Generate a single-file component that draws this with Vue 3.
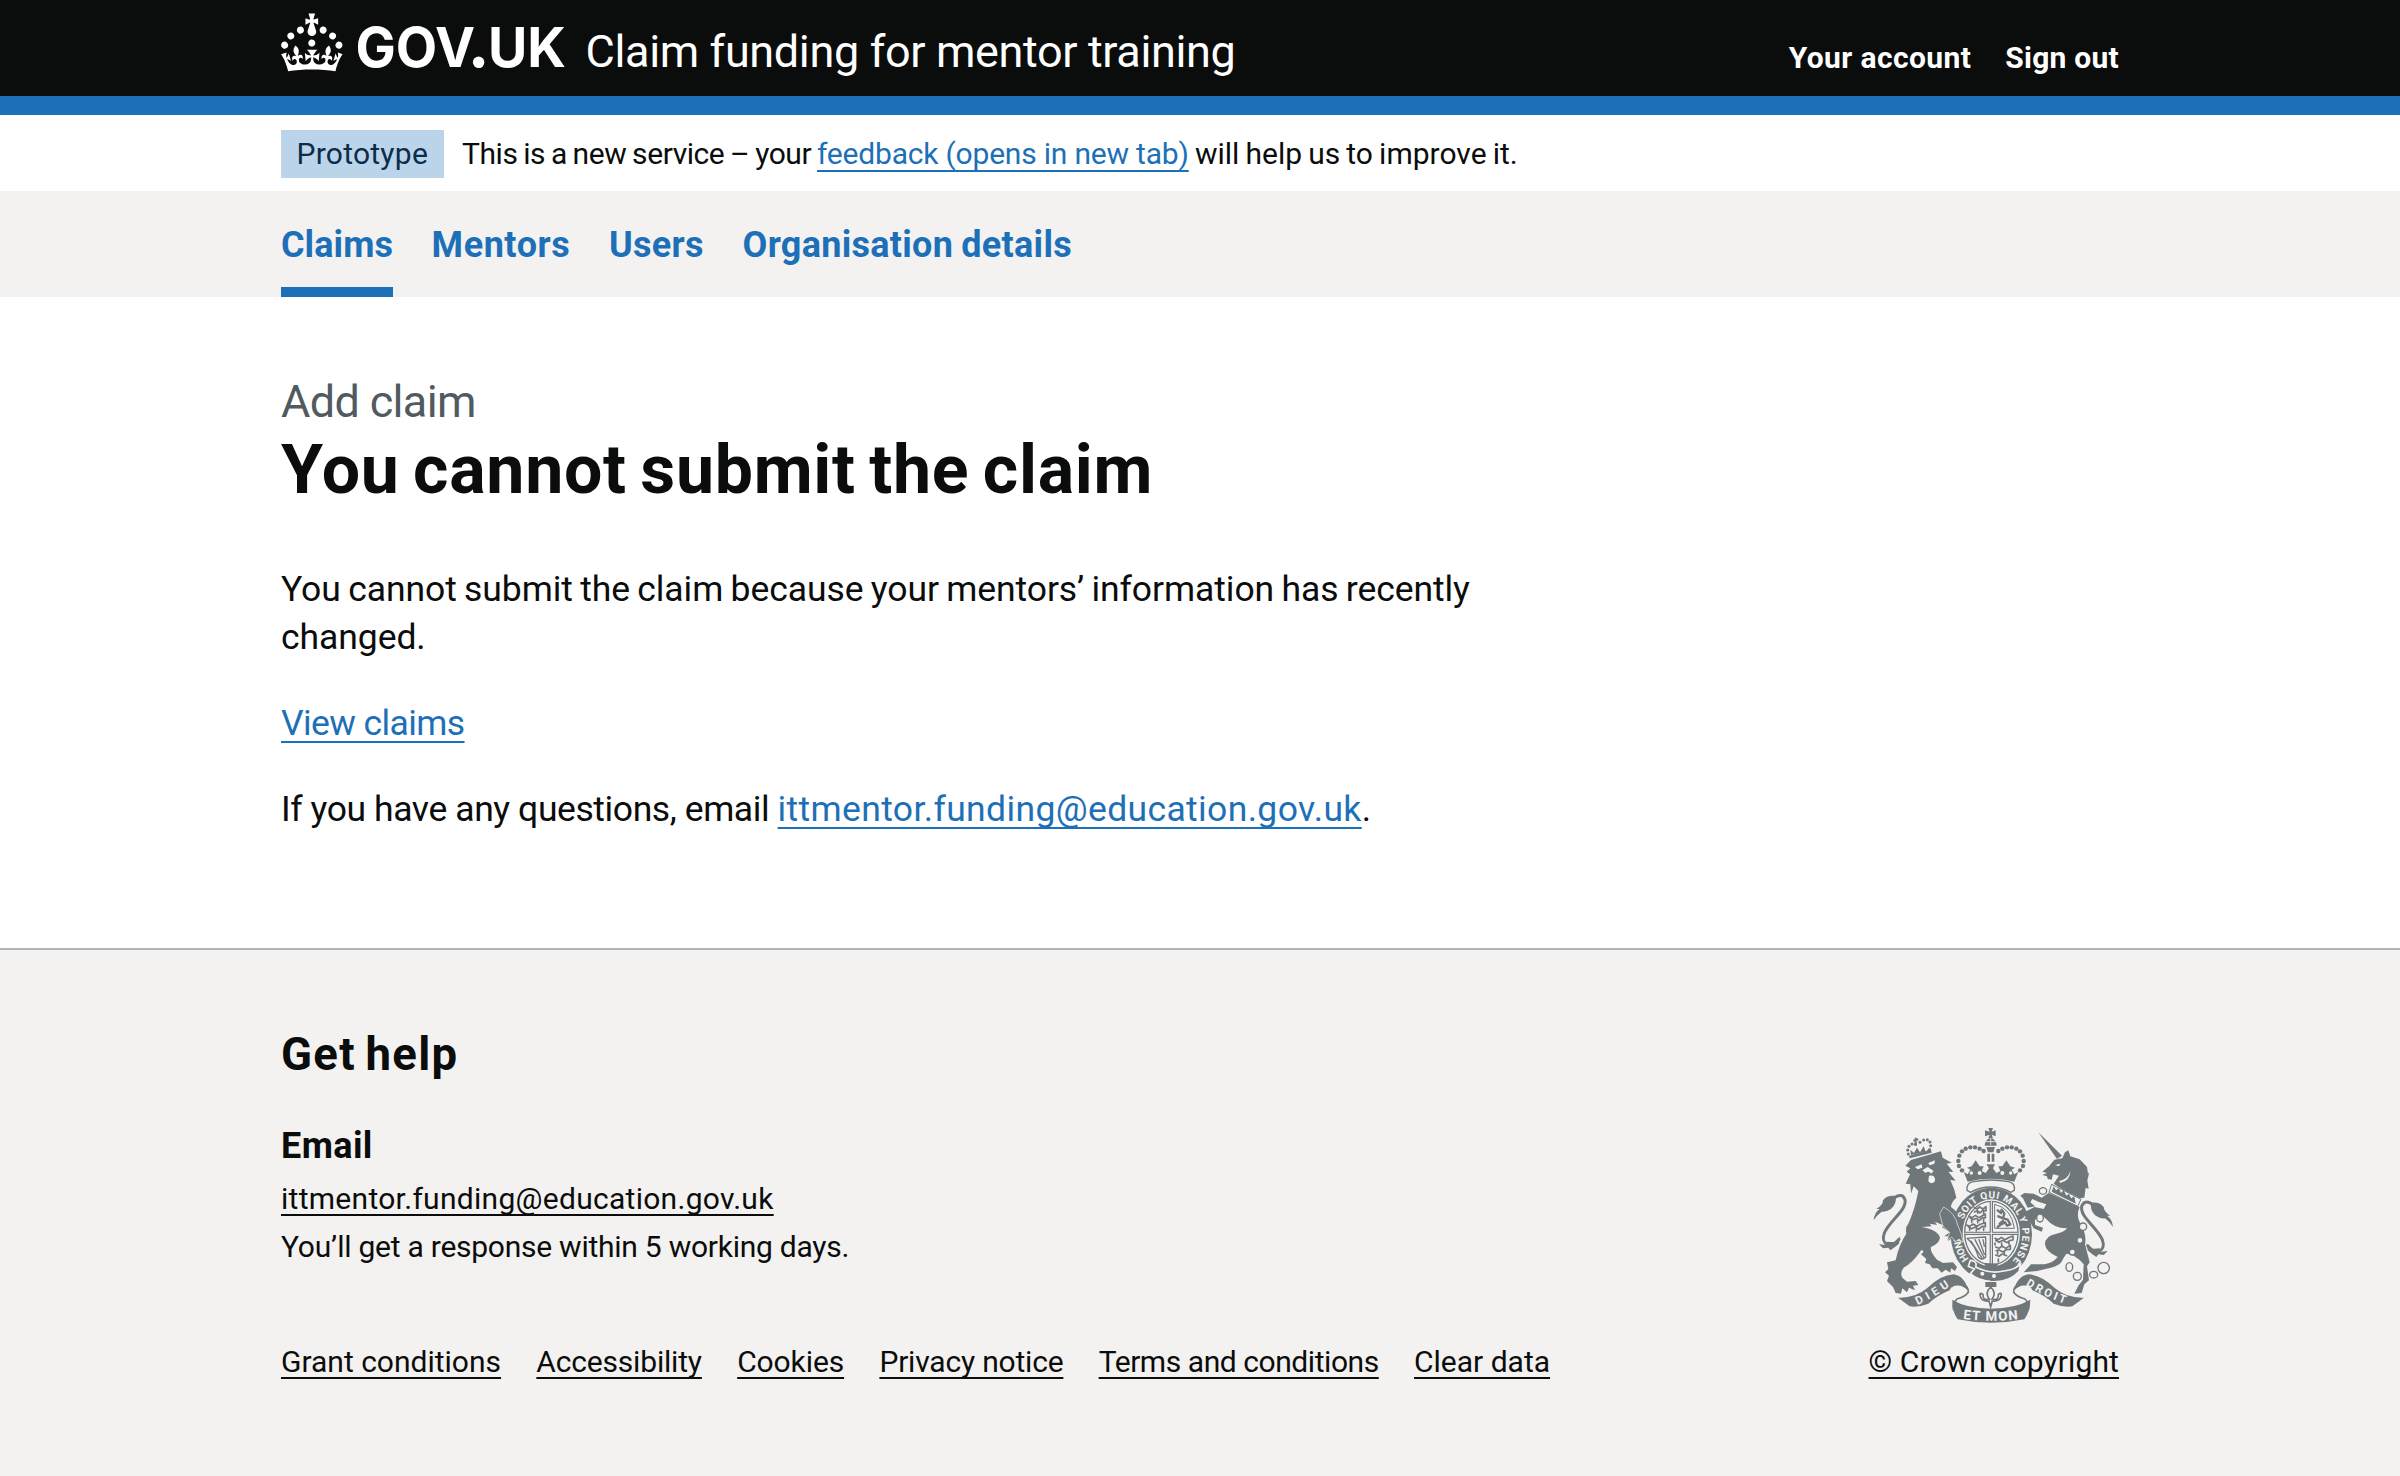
<script setup>
const nav = [
  { label: 'Claims', cls: 'n-claims', active: true },
  { label: 'Mentors', cls: 'n-mentors' },
  { label: 'Users', cls: 'n-users' },
  { label: 'Organisation details', cls: 'n-org' }
]
const footerLinks = [
  { label: 'Grant conditions', cls: 'f-grant' },
  { label: 'Accessibility', cls: 'f-access' },
  { label: 'Cookies', cls: 'f-cookies' },
  { label: 'Privacy notice', cls: 'f-privacy' },
  { label: 'Terms and conditions', cls: 'f-terms' },
  { label: 'Clear data', cls: 'f-clear' }
]
// Pearls on the left arch of the royal crown; the right arch is mirrored
const pearls = [[337, 180], [328, 167], [326, 152], [329, 136], [337, 123], [348, 115], [362, 111], [376, 111], [390, 115], [402, 122]]
const lionPearls = [[176, 131], [174, 119], [178, 108], [187, 101], [197, 102], [211, 96], [222, 89], [233, 88], [241, 95], [243, 106], [240, 118]]
</script>

<template>
  <div class="page">
    <header class="header">
      <div class="container header-row">
        <svg class="logo" viewBox="0 0 286 60" width="286" height="60" aria-label="GOV.UK">
          <g transform="translate(0 .4) scale(1.925)" fill="#fff">
            <path d="M22.6 10.4c-1 .4-2-.1-2.4-1-.4-.9.1-2 1-2.4.9-.4 2 .1 2.4 1s-.1 2-1 2.4m-5.9 6.7c-.9.4-2-.1-2.4-1-.4-.9.1-2 1-2.4.9-.4 2 .1 2.4 1s-.1 2-1 2.4m10.8-3.7c-1 .4-2-.1-2.4-1-.4-.9.1-2 1-2.4.9-.4 2 .1 2.4 1s0 2-1 2.4m3.3 4.8c-1 .4-2-.1-2.4-1-.4-.9.1-2 1-2.4.9-.4 2 .1 2.4 1s-.1 2-1 2.4M17 4.7l2.3 1.2V2.5l-2.3.7-.2-.2.9-3h-3.4l.9 3-.2.2c-.1.1-2.3-.7-2.3-.7v3.4L15 4.7c.1.1.1.2.2.2l-1.3 4c-.1.2-.1.4-.1.6 0 1.1.8 2 1.9 2.2h.7c1-.2 1.9-1.1 1.9-2.1 0-.2 0-.4-.1-.6l-1.3-4c-.1-.2 0-.2.1-.3m-7.6 5.7c.9.4 2-.1 2.4-1 .4-.9-.1-2-1-2.4-.9-.4-2 .1-2.4 1s0 2 1 2.4m-5 3c.9.4 2-.1 2.4-1 .4-.9-.1-2-1-2.4-.9-.4-2 .1-2.4 1s.1 2 1 2.4m-3.2 4.8c.9.4 2-.1 2.4-1 .4-.9-.1-2-1-2.4-.9-.4-2 .1-2.4 1s0 2 1 2.4m14.8 11c4.4 0 8.6.3 12.3.8 1.1-4.5 2.4-7 3.7-8.8l-2.5-.9c.2 1.3.3 1.9 0 2.7-.4-.4-.8-1.1-1.1-2.3l-1.2 4c.7-.5 1.3-.8 2-.9-1.1 2.5-2.6 3.1-3.5 3-1.1-.2-1.7-1.2-1.5-2.1.3-1.2 1.5-1.5 2.1-.1 1.1-2.3-.8-3-2-2.3 1.9-1.9 2.1-3.5.6-5.6-2.1 1.6-2.1 3.2-1.2 5.5-1.2-1.4-3.2-.6-2.5 1.6.9-1.4 2.1-.5 1.9.8-.2 1.1-1.7 2.1-3.5 1.9-2.7-.2-2.9-2.1-2.9-3.6.7-.1 1.9.5 2.9 1.9l.4-4.3c-1.1 1.1-2.1 1.4-3.2 1.4.4-1.2 2.1-3 2.1-3h-5.4s1.7 1.9 2.1 3c-1.1 0-2.1-.2-3.2-1.4l.4 4.3c1-1.4 2.2-2 2.9-1.9-.1 1.5-.2 3.4-2.9 3.6-1.9.2-3.4-.8-3.5-1.9-.2-1.3 1-2.2 1.9-.8.7-2.3-1.2-3-2.5-1.6.9-2.2.9-3.9-1.2-5.5-1.5 2-1.3 3.7.6 5.6-1.2-.7-3.1 0-2 2.3.6-1.4 1.8-1.1 2.1.1.2.9-.3 1.9-1.5 2.1-.9.2-2.4-.5-3.5-3 .6 0 1.2.3 2 .9l-1.2-4c-.3 1.1-.7 1.9-1.1 2.3-.3-.8-.2-1.4 0-2.7l-2.9.9C1.3 23 2.6 25.5 3.7 30c3.7-.5 7.9-.8 12.3-.8" />
          </g>
          <text class="wordmark" x="74.5" y="54" textLength="210.5" lengthAdjust="spacingAndGlyphs">GOV.UK</text>
          <circle cx="197.6" cy="49.2" r="5.7" fill="#fff" />
        </svg>
        <span class="service">Claim funding for mentor training</span>
        <nav class="account">
          <a class="a-you">Your account</a>
          <a class="a-out">Sign out</a>
        </nav>
      </div>
    </header>

    <div class="container phase">
      <strong class="tag">Prototype</strong>
      <span class="phase-text"><span class="p-lead">This is a new service – your </span><a class="link p-link">feedback (opens in new tab)</a><span class="p-tail"> will help us to improve it.</span></span>
    </div>

    <div class="primary">
      <nav class="container primary-row">
        <a v-for="n in nav" :key="n.label" :class="['nav-item', n.cls, { active: n.active }]">{{ n.label }}</a>
      </nav>
    </div>

    <main class="container main">
      <span class="caption">Add claim</span>
      <h1>You cannot submit the claim</h1>
      <p class="b-one">You cannot submit the claim because your mentors’ information has recently<br>changed.</p>
      <p><a class="link b-view">View claims</a></p>
      <p><span class="b-if">If you have any questions, email </span><a class="link b-mail">ittmentor.funding@education.gov.uk</a>.</p>
    </main>

    <footer class="footer">
      <div class="container">
        <h2>Get help</h2>
        <div class="footer-row">
          <div class="footer-left">
            <h3>Email</h3>
            <div><a class="flink f-mail">ittmentor.funding@education.gov.uk</a></div>
            <div class="f-resp">You’ll get a response within 5 working days.</div>
            <div class="links">
              <a v-for="l in footerLinks" :key="l.label" :class="['flink', l.cls]">{{ l.label }}</a>
            </div>
          </div>
          <div class="footer-right">
            <svg class="arms" viewBox="70 50 720 591" width="240" height="197" fill="#6f777b">
              <!-- tails -->
              <g id="tail">
                <path d="M134 262Q158 246 166 268C172 300 120 330 104 368C92 402 122 418 150 384" fill="none" stroke="#6f777b" stroke-width="9" />
                <path d="M72 330Q74 306 90 296L80 296Q100 284 100 270Q112 254 138 257Q142 280 124 296Q108 306 96 304Q82 314 72 330ZM88 402L108 404L112 394L138 396L152 378L148 400L136 410L122 420L116 412L100 414Z" />
              </g>
              <use href="#tail" transform="translate(862 20) scale(-1 1)" />
              <!-- lion -->
              <path d="M180 144L246 127L244 119L178 136Z" />
              <path d="M184 134L182 118L193 128L202 112L211 126L222 108L228 124L240 112L240 122Z" />
              <path d="M198 106V82M191 91L206 87" stroke="#6f777b" stroke-width="6" fill="none" />
              <circle v-for="(p, i) in lionPearls" :key="'l' + i" :cx="p[0]" :cy="p[1]" r="4.5" />
              <path d="M167 166L184 149L274 123L279 142L306 157L291 160L311 185L296 184L318 211L302 209L314 238L320 262Q304 276 304 290Q328 306 326 330L334 372L342 384L332 400L322 386L314 396L306 384L296 392L296 378L284 378L300 366L276 350L284 346L256 334L262 344L240 340L246 348L216 350Q264 358 271 382Q268 400 244 410Q240 424 262 448L280 458L310 456L322 470L316 482L304 474L302 487L288 478L276 487L264 474L248 474L240 462L226 458L230 446L214 432L222 424L216 418Q190 456 162 472Q150 488 158 502L172 514L198 512L206 524L190 526L196 540L178 532L172 546L158 534L154 550L138 548L130 530L112 512L118 496L106 486L116 476L112 456L138 450Q148 402 170 370Q166 350 176 340Q196 296 206 242L192 228L184 250L182 222L168 220L181 192L171 184L182 174Z" />
              <path d="M196 170L216 162L218 172L204 177ZM236 158L256 150L254 160L240 165Z" fill="#f3f2f1" />
              <path d="M218 180L234 170L252 182L244 190Q238 180 228 188ZM238 196Q258 192 256 212Q246 226 236 212Z" fill="#f3f2f1" />
              <!-- garter and shield -->
              <ellipse cx="425" cy="372" rx="122" ry="140" />
              <ellipse cx="425" cy="368" rx="86" ry="101" fill="#f3f2f1" />
              <ellipse cx="425" cy="368" rx="80" ry="95" fill="none" stroke="#6f777b" stroke-width="4" />
              <path d="M425 272V466M344 369H506" stroke="#6f777b" stroke-width="10" />
              <path d="M425 272V466M344 369H506" stroke="#f3f2f1" stroke-width="3" />
              <g fill="none" stroke="#6f777b" stroke-width="5" stroke-linecap="round" stroke-linejoin="round">
                <path d="M374 292l8 4 8-6 10 6 9-7v12l-10-1-8 8-8-7-9 4M358 318l10 4 9-7 11 7 10-6 9-5v12l-8-1-10 9-9-7-10 4-8-5M350 344l10 4 10-7 12 7 10-6 15-5v12l-10-1-10 9-10-7-11 5-10-6" />
                <path d="M384 302v7M402 304v7M366 328v8M384 329v8M402 328v8M360 354v6M380 356v6M402 354v6" />
                <path d="M436 384l10 4 9-7 11 7 10-6 14-5v12l-9 1-10 7-11-7-12 6-10-6M438 410l10 4 9-7 11 7 14-9v12l-12 1-10 7-12-6-8 2M438 434l10 4 9-7 14 5M436 398v6M456 398v6M478 396v6M444 424v6M464 424v6M446 446v8" />
                <path d="M436 282Q486 294 494 354H436Z" stroke-width="3" />
                <path d="M444 300l10 8 2-10 8 12-4 14 14 4 8 14-10 4-6-10-12 6-10 8M446 318l14 6M450 340l10-8" stroke-width="7" />
                <path d="M352 384L408 380V440Q396 452 386 440Q376 404 352 384ZM364 392l32 50M376 388l26 52M388 388l16 44M400 388l4 20" stroke-width="4" />
              </g>
              <path d="M404 458L446 460L440 474L408 472Z" />
              <path id="motto-a" d="M358 446A92 108 0 0 1 334 352" fill="none" />
              <path id="motto-b" d="M341 328A92 108 0 0 1 506 320" fill="none" />
              <path id="motto-c" d="M508 322A92 108 0 0 1 474 464" fill="none" />
              <text class="motto"><textPath href="#motto-a" textLength="68">HONI</textPath></text>
              <text class="motto"><textPath href="#motto-b" textLength="212">SOIT QUI MAL</textPath></text>
              <text class="motto"><textPath href="#motto-c" textLength="138">Y PENSE</textPath></text>
              <!-- buckle and strap end -->
              <path d="M362 450Q384 452 378 470Q420 492 462 482Q500 478 514 458L508 484Q478 518 424 514Q384 510 362 490L374 476L356 468Z" stroke="#f3f2f1" stroke-width="5" />
              <circle cx="398" cy="490" r="6" fill="#f3f2f1" /><circle cx="433" cy="497" r="6" fill="#f3f2f1" />
              <!-- lion forepaw -->
              <path d="M282 290Q316 308 324 344L336 374L340 396L328 386L318 394L306 380L292 390L300 366L280 348L270 310Z" stroke="#f3f2f1" stroke-width="2" />
              <!-- royal crown -->
              <path d="M352 240Q350 216 372 214Q423 204 476 214Q498 218 494 240L484 246Q423 214 362 246Z" fill="#f3f2f1" stroke="#6f777b" stroke-width="4" />
              <path d="M342 184L354 192L362 178L352 172L366 168L378 150L390 168L402 168L396 182L408 188L418 174L410 162H436L430 174L440 188L452 182L446 168L458 168L470 150L482 168L496 172L486 178L494 192L506 184L494 214Q423 196 354 214Z" />
              <circle cx="390" cy="188" r="6" fill="#f3f2f1" /><circle cx="458" cy="188" r="6" fill="#f3f2f1" />
              <circle cx="365" cy="188" r="5" fill="#f3f2f1" /><circle cx="483" cy="188" r="5" fill="#f3f2f1" />
              <g id="arch"><circle v-for="(p, i) in pearls" :key="'p' + i" :cx="p[0]" :cy="p[1]" r="6.6" /></g>
              <use href="#arch" transform="translate(848 0) scale(-1 1)" />
              <path d="M405 106A18 22 0 0 1 441 106ZM410 110H436L431 126H415ZM413 130H421V154H413ZM426 130H434V154H426Z" />
              <path d="M416 53H430L426 64L438 60V78L426 73L430 84H416L420 73L406 78V60L420 64Z" />
              <path d="M408 94H438M423 84V104" stroke="#f3f2f1" stroke-width="2.5" />
              <!-- unicorn -->
              <path d="M566 66L637 136L622 146Z" />
              <path d="M578 184L598 168L614 148L638 144L646 126L656 120L662 138L690 147L712 170L715 190L719 186L713 210L717 236L708 232L704 262L690 264L640 238L612 220L628 196L610 192L606 208L594 206L592 198L578 194L592 188Z" />
              <path d="M616 164L632 160L628 168ZM628 212Q656 206 662 182Q662 210 632 218Z" fill="#f3f2f1" />
              <path d="M606 222L694 267L684 288L598 246Z" fill="#f3f2f1" stroke="#6f777b" stroke-width="3" />
              <path d="M606 244L612 228L619 240L628 234L634 248L642 240L650 256L658 250L664 264L674 258L678 280Z" />
              <path d="M597 248L690 290Q678 316 692 340Q712 372 706 402L720 456L712 468L718 510L704 522L696 548L674 550L686 526L700 508L702 462Q676 430 650 430L640 446Q634 466 604 472L562 482L522 486L544 462L584 462Q610 458 624 440Q588 424 586 402Q586 376 620 370Q644 366 652 354Q610 352 592 328L580 318L556 328L556 344L580 352L576 364L552 354L538 330L528 322L524 306L554 290L582 296L590 282L566 274L548 266L542 276L556 288L534 292L520 264L512 256L524 248L552 250L576 262Z" />
              <g fill="#f3f2f1" stroke="#6f777b" stroke-width="4">
                <ellipse cx="580" cy="242" rx="11" ry="10" /><ellipse cx="571" cy="323" rx="10" ry="12" />
                <circle cx="700" cy="349" r="11" /><circle cx="691" cy="390" r="9" /><circle cx="668" cy="425" r="9" />
                <ellipse cx="659" cy="470" rx="10" ry="13" /><circle cx="683" cy="498" r="12" /><ellipse cx="732" cy="493" rx="12" ry="10" /><circle cx="762" cy="473" r="17" />
              </g>
              <!-- plume between the scrolls -->
              <path d="M407 515H440V530H407Z" />
              <path d="M423 530Q404 548 419 566Q398 572 400 552Q388 544 392 558Q396 574 418 572L423 590L428 572Q450 574 454 558Q458 544 446 552Q448 572 427 566Q442 548 423 530Z" fill="#f3f2f1" stroke="#6f777b" stroke-width="5" />
              <!-- scrolls -->
              <g id="scroll">
                <path d="M306 530Q310 512 334 516Q358 530 356 546Q346 560 322 566Q306 582 312 600" fill="none" stroke="#6f777b" stroke-width="5" />
                <path d="M145 562Q196 564 232 534Q272 494 312 492Q346 498 356 542Q340 522 316 526Q302 530 300 540Q262 556 236 580Q206 592 180 588Z" />
              </g>
              <use href="#scroll" transform="translate(848 0) scale(-1 1)" />
              <path d="M308 568Q350 594 424 595Q498 594 542 568Q542 602 524 627Q424 648 324 627Q306 602 308 568Z" />
              <path id="dieu" d="M204 584Q250 564 308 522" fill="none" />
              <path id="droit" d="M528 524Q580 558 652 582" fill="none" />
              <path id="etmon" d="M340 626Q424 637 508 626" fill="none" />
              <text class="scroll-text"><textPath href="#dieu" textLength="112">DIEU</textPath></text>
              <text class="scroll-text"><textPath href="#droit" textLength="130">DROIT</textPath></text>
              <text class="scroll-text big"><textPath href="#etmon" textLength="166">ET MON</textPath></text>
            </svg>
            <a class="flink f-crown">© Crown copyright</a>
          </div>
        </div>
      </div>
    </footer>
  </div>
</template>

<style>
body { margin: 0; background: #fff; }
</style>

<style scoped>
.page {
  min-height: 1476px;
  display: flex;
  flex-direction: column;
  font-family: Roboto, "Liberation Sans", sans-serif;
  color: #0b0c0c;
  white-space: nowrap;
}
.container { width: 1838px; margin: 0 auto; }
.header { background: #0b0c0c; border-bottom: 19px solid #1d70b8; height: 96px; color: #fff; }
.header-row { display: flex; align-items: flex-start; }
.logo { margin-top: 13px; flex: none; overflow: visible; }
.wordmark { font: 700 55px Inter, sans-serif; fill: #fff; }
.service { font-size: 45px; line-height: 48px; letter-spacing: -.36px; margin: 28px 0 0 18.5px; }
.account { margin: 40px 0 0 auto; display: flex; gap: 34px; font-size: 30px; line-height: 36px; font-weight: 700; }
.a-you { letter-spacing: .4px; }
.a-out { letter-spacing: .25px; }

.phase { height: 76px; display: flex; align-items: flex-start; }
.tag {
  margin-top: 15px; width: 162.5px; height: 48px; line-height: 47px; box-sizing: border-box; padding-left: 15.5px;
  background: #bbd4ea; color: #0c2d4a; font-size: 30px; font-weight: 400; letter-spacing: .25px;
}
.phase-text { margin: 15px 0 0 18.5px; font-size: 30px; line-height: 48px; white-space: pre; }
.p-lead { word-spacing: -1.2px; letter-spacing: -.44px; }
.p-link { letter-spacing: -.2px; text-underline-offset: 5px; }
.p-tail { word-spacing: -1.3px; }
.link { color: #1d70b8; text-decoration: underline 2px; text-underline-offset: 6px; text-decoration-skip-ink: none; }

.primary { background: #f3f2f1; }
.primary-row { display: flex; gap: 38.6px; height: 106px; }
.nav-item { box-sizing: border-box; padding-top: 30px; font-size: 36px; line-height: 48px; font-weight: 700; color: #1d70b8; }
.nav-item.active { border-bottom: 10px solid #1d70b8; }
.n-claims { letter-spacing: .07px; }
.n-mentors { letter-spacing: .55px; }
.n-users { letter-spacing: .35px; }
.n-org { letter-spacing: .28px; word-spacing: -1px; }

.main { flex: none; height: 651px; box-sizing: border-box; padding-top: 81px; font-size: 35.5px; line-height: 48px; }
.caption { display: block; font-size: 45px; line-height: 48px; letter-spacing: -.65px; color: #505a5f; }
h1 { margin: 9px 0 60px; font-size: 68px; line-height: 70px; letter-spacing: .7px; word-spacing: -4px; font-weight: 700; }
p { margin: 0 0 38px; }
.b-one { letter-spacing: -.07px; word-spacing: -1.4px; }
.b-view { letter-spacing: -.6px; }
.b-if { letter-spacing: -.41px; }
.b-mail { letter-spacing: .365px; }

.footer { flex: 1; background: #f3f2f1; border-top: 2px solid #b1b4b6; padding-top: 81px; font-size: 30px; line-height: 48px; }
h2 { margin: 0 0 43px; font-size: 45.5px; line-height: 48px; letter-spacing: 1.3px; word-spacing: -3px; }
h3 { margin: 0 0 5px; font-size: 36px; line-height: 48px; letter-spacing: .4px; }
.footer-row { display: flex; justify-content: space-between; align-items: flex-end; }
.footer-right { display: flex; flex-direction: column; align-items: center; }
.arms { display: block; margin-bottom: 14px; margin-right: 2px; overflow: visible; }
.flink { text-decoration: underline 2px; text-underline-offset: 5px; text-decoration-skip-ink: none; }
.links { display: flex; gap: 35.3px; margin-top: 67px; }
.f-mail { letter-spacing: .28px; text-underline-offset: 5px; }
.f-resp { letter-spacing: -.25px; }
.f-access { letter-spacing: -.18px; }
.f-cookies { letter-spacing: -.1px; }
.f-privacy { letter-spacing: -.2px; }
.f-terms { letter-spacing: -.44px; }
.f-crown { letter-spacing: .12px; }
.motto { font: 700 30px Roboto, sans-serif; fill: #f3f2f1; }
.scroll-text { font: 700 34px Roboto, sans-serif; fill: #f3f2f1; }
.scroll-text.big { font-size: 40px; }
</style>
